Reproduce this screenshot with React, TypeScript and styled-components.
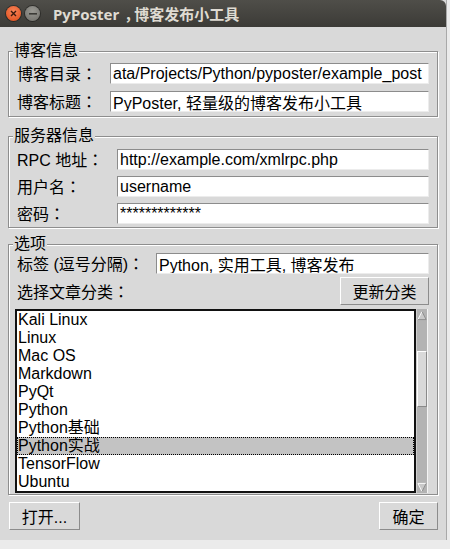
import React from "react";
import styled, { createGlobalStyle } from "styled-components";

const FONT = `"Liberation Sans", "Noto Sans CJK SC", sans-serif`;

const Global = createGlobalStyle`
  html, body { margin: 0; padding: 0; background: #ebebeb; }
  #root { width: 450px; height: 549px; overflow: hidden; }
  * { box-sizing: border-box; }
`;

const Screen = styled.div`
  width: 450px;
  height: 549px;
  background: #ebebeb;
  display: flex;
  flex-direction: column;
`;

const Window = styled.div`
  width: 447px;
  height: 540px;
  display: flex;
  flex-direction: column;
  background: #d9d9d9;
  border-right: 1px solid #a9a9a9;
  font-family: ${FONT};
  font-size: 16px;
  color: #000;
`;

const TitleBar = styled.div`
  height: 27px;
  flex: none;
  display: flex;
  align-items: center;
  padding-left: 6px;
  gap: 4px;
  background: linear-gradient(#4f4e49, #3c3b37);
  border-top-right-radius: 6px;
`;

const WinButton = styled.div<{ $kind: "close" | "min" }>`
  width: 15px;
  height: 15px;
  border-radius: 50%;
  display: flex;
  align-items: center;
  justify-content: center;
  background: ${(p) =>
    p.$kind === "close"
      ? "radial-gradient(circle at 50% 35%, #f78459, #df4a16)"
      : "radial-gradient(circle at 50% 35%, #9a9993, #6f6e69)"};
  box-shadow: 0 0 0 1px rgba(0, 0, 0, 0.35);
`;

const Title = styled.div`
  margin-left: 9px;
  font-family: "Noto Sans", "Noto Sans CJK SC", sans-serif;
  font-weight: 700;
  font-size: 15px;
  line-height: 18px;
  color: #dfdbd2;
`;

const TitleComma = styled.span`
  padding-left: 5px;
  letter-spacing: -5px;
`;

/* full-width colon drawn centred in its cell, as in the reference */
const Punct = styled.span`
  font-family: "Noto Sans CJK TC", "Noto Sans CJK SC", sans-serif;
`;

const Body = styled.div`
  flex: 1;
  display: flex;
  flex-direction: column;
  padding: 0 8px 0 8px;
`;

const Frame = styled.fieldset<{ $mt: number; $pt: number; $pb: number }>`
  margin: ${(p) => p.$mt}px 0 0 0;
  padding: ${(p) => p.$pt}px 8px ${(p) => p.$pb}px 4px;
  min-width: 0;
  border: 1px solid #8e8e8e;
  box-shadow: inset 1px 1px 0 #fff, 1px 1px 0 #fff;
`;

const Legend = styled.legend`
  padding: 0 1px;
  margin: 0;
  font-size: 16px;
  line-height: 18px;
  background: #d9d9d9;
`;

const FormGrid = styled.div<{ $labelW: number; $gap: number }>`
  display: grid;
  grid-template-columns: ${(p) => p.$labelW}px 1fr;
  row-gap: ${(p) => p.$gap}px;
  padding-left: 4px;
`;

const Label = styled.div`
  height: 21px;
  line-height: 21px;
  white-space: nowrap;
`;

const Entry = styled.input`
  height: 21px;
  width: 100%;
  margin: 0;
  padding: 0 2px;
  font-family: ${FONT};
  font-size: 16px;
  color: #000;
  background: #fff;
  border: 1px solid;
  border-color: #8c8c8c #ececec #ececec #8c8c8c;
  outline: none;
`;

const CategoryRow = styled.div`
  margin-top: 3px;
  height: 28px;
  display: flex;
  align-items: center;
  justify-content: space-between;
  padding-left: 4px;
`;

const Button = styled.button<{ $w: number }>`
  width: ${(p) => p.$w}px;
  height: 28px;
  padding: 0;
  font-family: ${FONT};
  font-size: 16px;
  color: #000;
  background: #d9d9d9;
  border: 1px solid;
  border-color: #fff #8c8c8c #8c8c8c #fff;
`;

const ListArea = styled.div`
  margin: 4px 1px 0 2px;
  height: 184px;
  display: flex;
`;

const Listbox = styled.div`
  flex: 1;
  background: #fff;
  border: 2px solid #111;
  display: flex;
  flex-direction: column;
  overflow: hidden;
`;

const ListRow = styled.div<{ $sel?: boolean }>`
  height: 18px;
  flex: none;
  line-height: 18px;
  padding-left: 1px;
  white-space: nowrap;
  background: ${(p) => (p.$sel ? "#c3c3c3" : "transparent")};
  outline: ${(p) => (p.$sel ? "1px dotted #000" : "none")};
  outline-offset: -1px;
`;

const Scrollbar = styled.div`
  width: 12px;
  display: flex;
  flex-direction: column;
  background: #b3b3b3;
  border-left: 1px solid #cfcfcf;
  border-right: 1px solid #f4f4f4;
`;

const Arrow = styled.div`
  height: 12px;
  flex: none;
  display: flex;
  align-items: center;
  justify-content: center;
`;

const Trough = styled.div`
  flex: 1;
  display: flex;
  flex-direction: column;
`;

const Thumb = styled.div`
  height: 56px;
  background: #d9d9d9;
  border: 1px solid;
  border-color: #fff #8a8a8a #8a8a8a #fff;
`;

const BottomRow = styled.div`
  margin-top: 7px;
  display: flex;
  justify-content: space-between;
  padding-left: 1px;
`;

const categories = [
  "Kali Linux",
  "Linux",
  "Mac OS",
  "Markdown",
  "PyQt",
  "Python",
  "Python基础",
  "Python实战",
  "TensorFlow",
  "Ubuntu",
];

const UpArrow = () => (
  <svg width="11" height="11" viewBox="0 0 11 11">
    <polygon points="5.5,1 10,10 1,10" fill="#c9c9c9" />
    <polyline points="1,10 5.5,1" stroke="#fff" strokeWidth="1" fill="none" />
    <polyline points="5.5,1 10,10 1,10" stroke="#8a8a8a" strokeWidth="1" fill="none" />
  </svg>
);

const DownArrow = () => (
  <svg width="11" height="11" viewBox="0 0 11 11">
    <polygon points="1,1 10,1 5.5,10" fill="#c9c9c9" />
    <polyline points="5.5,10 1,1 10,1" stroke="#fff" strokeWidth="1" fill="none" />
    <polyline points="10,1 5.5,10" stroke="#8a8a8a" strokeWidth="1" fill="none" />
  </svg>
);

const C = () => <Punct>：</Punct>;

export default function App() {
  return (
    <>
      <Global />
      <Screen>
        <Window>
          <TitleBar>
            <WinButton $kind="close">
              <svg width="7" height="7" viewBox="0 0 7 7">
                <path d="M1 1L6 6M6 1L1 6" stroke="#3a1a0e" strokeWidth="1.4" />
              </svg>
            </WinButton>
            <WinButton $kind="min">
              <svg width="8" height="2" viewBox="0 0 8 2">
                <rect x="0" y="0" width="8" height="1.6" fill="#3b3a36" />
              </svg>
            </WinButton>
            <Title>
              PyPoster<TitleComma>，</TitleComma>博客发布小工具
            </Title>
          </TitleBar>
          <Body>
            <Frame $mt={15} $pt={3} $pb={4}>
              <Legend>博客信息</Legend>
              <FormGrid $labelW={93} $gap={7}>
                <Label>
                  博客目录<C />
                </Label>
                <Entry readOnly value="ata/Projects/Python/pyposter/example_post" />
                <Label>
                  博客标题<C />
                </Label>
                <Entry readOnly value="PyPoster, 轻量级的博客发布小工具" />
              </FormGrid>
            </Frame>
            <Frame $mt={10} $pt={4} $pb={3}>
              <Legend>服务器信息</Legend>
              <FormGrid $labelW={100} $gap={6}>
                <Label>
                  RPC 地址<C />
                </Label>
                <Entry readOnly value="http://example.com/xmlrpc.php" />
                <Label>
                  用户名<C />
                </Label>
                <Entry readOnly value="username" />
                <Label>
                  密码<C />
                </Label>
                <Entry readOnly value="*************" />
              </FormGrid>
            </Frame>
            <Frame $mt={7} $pt={0} $pb={1}>
              <Legend>选项</Legend>
              <FormGrid $labelW={139} $gap={0}>
                <Label>
                  标签 (逗号分隔)<C />
                </Label>
                <Entry readOnly value="Python, 实用工具, 博客发布" />
              </FormGrid>
              <CategoryRow>
                <Label>
                  选择文章分类<C />
                </Label>
                <Button $w={89}>更新分类</Button>
              </CategoryRow>
              <ListArea>
                <Listbox>
                  {categories.map((c) => (
                    <ListRow key={c} $sel={c === "Python实战"}>
                      {c}
                    </ListRow>
                  ))}
                </Listbox>
                <Scrollbar>
                  <Arrow>
                    <UpArrow />
                  </Arrow>
                  <Trough>
                    <Thumb style={{ marginTop: 30 }} />
                  </Trough>
                  <Arrow>
                    <DownArrow />
                  </Arrow>
                </Scrollbar>
              </ListArea>
            </Frame>
            <BottomRow>
              <Button $w={71}>打开...</Button>
              <Button $w={59}>确定</Button>
            </BottomRow>
          </Body>
        </Window>
      </Screen>
    </>
  );
}
